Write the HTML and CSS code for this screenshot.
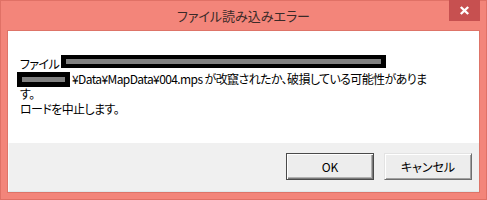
FILE: index.html
```html
<!DOCTYPE html>
<html lang="ja">
<head>
<meta charset="utf-8">
<title>ファイル読み込みエラー</title>
<link rel="stylesheet" href="styles.css">
</head>
<body>
<div class="window">
  <div class="titlebar">
    <span class="title">ファイル読み込みエラー</span>
    <span class="close" aria-label="閉じる">
      <svg width="11" height="9" viewBox="0 0 11 9"><path d="M1.8 1 L9.2 8 M9.2 1 L1.8 8" stroke="#fff" stroke-width="2.4" stroke-linecap="butt"/></svg>
    </span>
  </div>
  <div class="client">
    <div class="message">
      <div class="line l1">ファイル<span class="redact r1"><span class="bar"></span></span></div>
      <div class="line l2"><span class="redact r2"><span class="bar"></span></span>¥Data¥MapData¥004.mps が改竄されたか、破損している可能性がありま</div>
      <div class="line l3">す。</div>
      <div class="line l4">ロードを中止します。</div>
    </div>
    <div class="actions">
      <button class="btn btn-default">OK</button>
      <button class="btn">キャンセル</button>
    </div>
  </div>
</div>
</body>
</html>
```
FILE: styles.css
```css
html, body {
  margin: 0;
  padding: 0;
}
body {
  width: 487px;
  height: 200px;
  overflow: hidden;
  font-family: "Noto Sans CJK JP", "Noto Sans", sans-serif;
  font-feature-settings: "palt";
}
.window {
  box-sizing: border-box;
  width: 487px;
  height: 200px;
  background: #f3857a;
  border: 1px solid #e07166;
  padding: 0 6px 6px 6px;
  display: flex;
  flex-direction: column;
}
.titlebar {
  position: relative;
  height: 29px;
  display: flex;
  align-items: center;
  justify-content: center;
}
.title {
  font-size: 13px;
  color: #3a2a28;
  line-height: 1;
}
.close {
  position: absolute;
  top: -1px;
  right: 0px;
  width: 31px;
  height: 21px;
  background: #c75050;
  display: flex;
  align-items: center;
  justify-content: center;
}
.client {
  box-sizing: border-box;
  height: 163px;
  border: 1px solid #de7468;
  background: #ffffff;
  display: flex;
  flex-direction: column;
}
.message {
  height: 112px;
  box-sizing: border-box;
  padding: 25px 0 0 12px;
  font-size: 12px;
  letter-spacing: -0.6px;
  color: #000;
  line-height: 15px;
}
.line {
  white-space: nowrap;
  height: 15px;
}
.redact {
  display: inline-block;
  background: #000;
  vertical-align: top;
  box-sizing: border-box;
}
.r1 {
  width: 325px;
  height: 13px;
  margin-left: 2px;
  margin-top: -1px;
  padding: 4px 5px;
}
.r2 {
  width: 53px;
  height: 15px;
  margin-left: -3px;
  margin-right: 2px;
  margin-top: 1px;
  padding: 5px 5px;
}
.bar {
  display: block;
  height: 100%;
  background: #808080;
}
.actions {
  flex: 1;
  background: #f0f0f0;
  border-left: 1px solid #fafafa;
  border-bottom: 1px solid #dfe8ea;
  display: flex;
  justify-content: flex-end;
  align-items: flex-start;
  gap: 10px;
  padding: 10px 7px 0 0;
}
.btn {
  box-sizing: border-box;
  width: 88px;
  height: 27px;
  margin: 0;
  padding: 0;
  font-family: "Noto Sans CJK JP", "Noto Sans", sans-serif;
  font-feature-settings: "palt";
  font-size: 12px;
  color: #000;
  background: #ededed;
  border: 1px solid;
  border-color: #e3e3e3 #6e6e6e #6e6e6e #e3e3e3;
  box-shadow: inset 1px 1px #ffffff, inset -1px -1px #a0a0a0;
  line-height: 1;
}
.btn-default {
  border: 1px solid #4a4a4a;
  box-shadow: inset 1px 1px #ffffff, inset -1px -1px #7a7a7a, inset -2px -2px #b0b0b0;
}
```
